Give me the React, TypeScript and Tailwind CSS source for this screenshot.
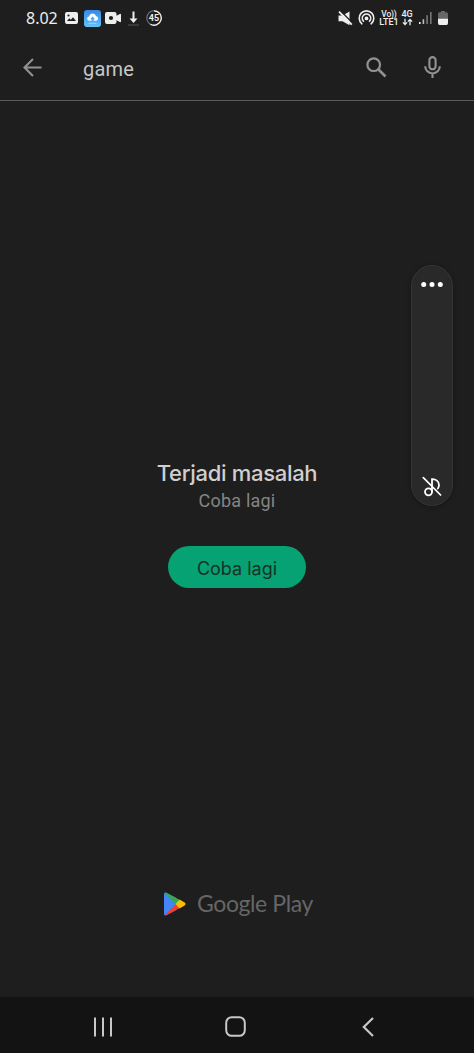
import type { ReactNode } from "react";

interface IconProps {
  width: number;
  height: number;
  className?: string;
  children: ReactNode;
}

function Icon({ width, height, className, children }: IconProps) {
  return (
    <svg
      width={width}
      height={height}
      viewBox={`0 0 ${width} ${height}`}
      fill="none"
      className={`shrink-0 ${className ?? ""}`}
    >
      {children}
    </svg>
  );
}

function StatusBar() {
  return (
    <header className="flex h-9 shrink-0 items-center pl-[26px] pr-[26px] text-[#eeeeee]">
      <span className="w-[39px] font-['Noto_Sans',sans-serif] text-[16px] leading-9">8.02</span>
      <Icon width={13} height={14}>
        <path fill="#eee" fillRule="evenodd" d="M2 1h9q2 0 2 2v8q0 2-2 2H2q-2 0-2-2V3q0-2 2-2Zm0 9h9L8 6.2 5.8 8.8 4.4 7.2Zm1.5-6.6a1.1 1.1 0 1 0 0 2.2 1.1 1.1 0 0 0 0-2.2Z" />
      </Icon>
      <Icon width={17} height={17} className="ml-1.5">
        <defs>
          <linearGradient id="cloud-bg" x1="0" y1="0" x2="0" y2="1">
            <stop offset="0" stopColor="#3689e9" />
            <stop offset="1" stopColor="#62c3fa" />
          </linearGradient>
        </defs>
        <rect width="17" height="17" rx="3" fill="url(#cloud-bg)" />
        <path fill="#fff" d="M5.8 10.7C3.8 10.7 3 9.4 3.2 8.2c.2-1.1 1-1.8 2-1.8C5.5 4.4 6.9 3.4 8.6 3.4c1.8 0 3.1 1.1 3.4 2.9 1.2.1 2.1 1 2.1 2.2 0 1.3-1 2.2-2.4 2.2h-1.9V9.2h1.1L8.6 6.5 6.3 9.2h1.2v1.5Z" />
        <path stroke="#9bd8fc" strokeWidth="1" d="M4.5 13.3h8" />
      </Icon>
      <Icon width={16} height={12} className="ml-1">
        <path fill="#eee" fillRule="evenodd" d="M2 0h7.5q2 0 2 2v1.8L14.8 2q1.2-.5 1.2.8v6.4q0 1.3-1.2.8l-3.3-1.8V10q0 2-2 2H2q-2 0-2-2V2q0-2 2-2Zm4 3.9a2.1 2.1 0 1 0 0 4.2 2.1 2.1 0 0 0 0-4.2Z" />
      </Icon>
      <Icon width={11} height={15} className="ml-[7px]">
        <path fill="#eee" d="M4.5.5h2v7h3L5.5 12 1.5 7.5h3Z" />
        <path stroke="#555" d="M0 14h11" />
      </Icon>
      <span className="relative ml-[7px] flex size-4 shrink-0 items-center justify-center">
        <svg width="16" height="16" viewBox="0 0 16 16" fill="none" className="absolute inset-0">
          <circle cx="8" cy="8" r="7.2" stroke="#777" strokeWidth="1.1" />
          <path d="M8 .8a7.2 7.2 0 1 1-3.6 13.4" stroke="#eee" strokeWidth="1.3" />
        </svg>
        <span className="font-['Roboto',sans-serif] text-[9px] leading-4 font-bold">45</span>
      </span>

      <Icon width={15} height={15} className="ml-auto">
        <path fill="#eee" d="M.5 4.6h4L11.5.4v13.8L4.5 10.2h-4Z" />
        <path stroke="#1e1e1e" strokeWidth="1.4" d="M2.6 0 15 12.4" />
        <path stroke="#eee" strokeWidth="1.8" d="m1 .6 12.8 13" />
      </Icon>
      <Icon width={17} height={16} className="ml-[5px]">
        <g stroke="#eee" strokeWidth="1.6" strokeLinecap="round">
          <path d="M3.9 13.8a7.3 7.3 0 1 1 9.2 0" />
          <path d="M5.5 11.2a4.2 4.2 0 1 1 6 0" />
        </g>
        <circle cx="8.5" cy="8.4" r="1.9" fill="#eee" />
      </Icon>
      <span className="ml-[5px] flex w-[18px] flex-col items-center font-['Roboto',sans-serif] text-[9px] leading-2 font-medium">
        <span className="text-[8.5px] tracking-[-0.2px] whitespace-nowrap">Vo))</span>
        <span>LTE1</span>
      </span>
      <span className="ml-[3px] flex w-3 flex-col items-center font-['Roboto',sans-serif] text-[9px] leading-2 font-medium">
        <span>4G</span>
        <Icon width={11} height={8}>
          <path stroke="#eee" strokeWidth="1.3" d="M3 .8v5.7M.9 4.4 3 6.6l2.1-2.2M8 7.2V1.4M5.9 3.6 8 1.4l2.1 2.2" />
        </Icon>
      </span>
      <Icon width={13} height={14} className="ml-[6px]">
        <path fill="#eee" d="M0 11h1.6v2H0Z" />
        <path fill="#bbb" d="M3.6 8.2h1.6V13H3.6Z" />
        <path fill="#777" d="M7.3 4.3h1.6V13H7.3ZM11 1h1.6v12H11Z" />
      </Icon>
      <Icon width={10} height={14} className="ml-[6px]">
        <path fill="#666" d="M3 0h4v1.2h1.5Q10 1.2 10 3v4H0V3q0-1.8 1.5-1.8H3Z" />
        <path fill="#eee" d="M0 7.5h10V12q0 2-1.5 2h-7Q0 14 0 12Z" />
      </Icon>
    </header>
  );
}

function SearchBar() {
  return (
    <div className="flex h-[65px] shrink-0 items-center border-b-[1.5px] border-[#5b5b5b] pr-[33px] pb-[2px] pl-[23px]">
      <button aria-label="Kembali">
        <Icon width={19} height={19}>
          <path stroke="#929292" strokeWidth="2.1" d="M18.5 9.5H1.5M10 1 1.5 9.5 10 18" />
        </Icon>
      </button>
      <span className="mt-[3px] ml-[41px] font-['Roboto',sans-serif] text-[20px] leading-6 tracking-[0.2px] text-[#c7c7c7]">
        game
      </span>
      <button className="ml-auto" aria-label="Cari">
        <Icon width={21} height={21}>
          <circle cx="7.7" cy="7.7" r="6.3" stroke="#929292" strokeWidth="2.2" />
          <path stroke="#929292" strokeWidth="2.6" d="m12.5 12.5 7 7" />
        </Icon>
      </button>
      <button className="ml-[37px]" aria-label="Penelusuran suara">
        <Icon width={17} height={23}>
          <rect x="5.4" y="1.1" width="6.2" height="12.2" rx="3.1" stroke="#929292" strokeWidth="2.1" />
          <path stroke="#929292" strokeWidth="2.1" d="M1.2 10.2a7.3 7.3 0 0 0 14.6 0M8.5 17.5V22" />
        </Icon>
      </button>
    </div>
  );
}

// Floating volume panel that sits over the page
function SoundPanel() {
  return (
    <aside className="absolute top-[265px] left-[411px] flex h-[241px] w-[42px] flex-col items-center justify-between rounded-full border border-[#353535] bg-[#292929] pt-[16px] pb-[8px] shadow-[0_1px_5px_rgba(0,0,0,0.3)]">
      <Icon width={22} height={5}>
        <g fill="#fff">
          <circle cx="2.7" cy="2.5" r="2.5" />
          <circle cx="11" cy="2.5" r="2.5" />
          <circle cx="19.3" cy="2.5" r="2.5" />
        </g>
      </Icon>
      <Icon width={20} height={21}>
        <g stroke="#fff" strokeWidth="1.8" strokeLinecap="round">
          <circle cx="6.5" cy="15.8" r="3.5" />
          <path d="M10 15.8V3.2c3.8-.2 7 2.1 7 5.7 0 1.5-.4 2.7-1.2 3.6" />
        </g>
        <path stroke="#fff" strokeWidth="1.7" strokeLinecap="round" d="m1.3 1.7 17.3 17.3" />
      </Icon>
    </aside>
  );
}

function PlayLogo() {
  return (
    <div className="flex h-8 items-center justify-center">
      <Icon width={22} height={24}>
        <defs>
          <clipPath id="play-shape">
            <path d="M0 2.5Q0-.6 2.8.9L20.4 10.3q2.4 1.7 0 3.4L2.8 23.1Q0 24.6 0 21.5Z" />
          </clipPath>
        </defs>
        <g clipPath="url(#play-shape)">
          <path fill="#4385f4" d="M0 0h12v24H0Z" />
          <path fill="#35a852" d="M0 0h5l14 8-7 4.2L.8 1Z" />
          <path fill="#e94235" d="M0 24h5l14-8-7-4.2L.8 23Z" />
          <path fill="#fbbc04" d="m11.5 12 5-5.5L23 12l-6.5 5.5Z" />
        </g>
      </Icon>
      <span className="mb-[3px] ml-[11px] font-['Lato',sans-serif] text-[23px] leading-8 tracking-[-0.4px] whitespace-nowrap text-[#666666]">
        Google Play
      </span>
    </div>
  );
}

function NavigationBar() {
  return (
    <nav className="flex h-14 shrink-0 items-center bg-[#131313] pt-[3px] pr-[100px] pl-[94px]">
      <Icon width={18} height={20}>
        <path stroke="#c8c8c8" strokeWidth="2" d="M1 .5v19M9 .5v19M17 .5v19" />
      </Icon>
      <Icon width={21} height={21} className="ml-[113px]">
        <rect x="1.2" y="1.2" width="18.6" height="18.6" rx="5.5" stroke="#c8c8c8" strokeWidth="2" />
      </Icon>
      <Icon width={12} height={20} className="ml-auto">
        <path stroke="#c8c8c8" strokeWidth="2.2" d="m11 1-9.2 9 9.2 9" />
      </Icon>
    </nav>
  );
}

export default function App() {
  return (
    <div className="relative flex h-[1053px] w-[474px] flex-col overflow-hidden bg-[#1e1e1e]">
      <StatusBar />
      <SearchBar />
      <main className="flex flex-1 flex-col items-center pt-[357px]">
        <h1 className="font-['Inter',sans-serif] text-[22px] leading-[30px] font-medium tracking-[-0.3px] whitespace-nowrap text-[#cfcfcf]">
          Terjadi masalah
        </h1>
        <p className="mt-px font-['Roboto',sans-serif] text-[18px] leading-6 tracking-[0.2px] text-[#858585]">
          Coba lagi
        </p>
        <button className="mt-[33px] h-[42px] w-[138px] rounded-full bg-[#06a273] pt-[2px] font-['Inter',sans-serif] text-[18px] text-[#173127]">
          Coba lagi
        </button>
        <div className="mt-auto mb-[77px] ml-[3px]">
          <PlayLogo />
        </div>
      </main>
      <NavigationBar />
      <SoundPanel />
    </div>
  );
}
